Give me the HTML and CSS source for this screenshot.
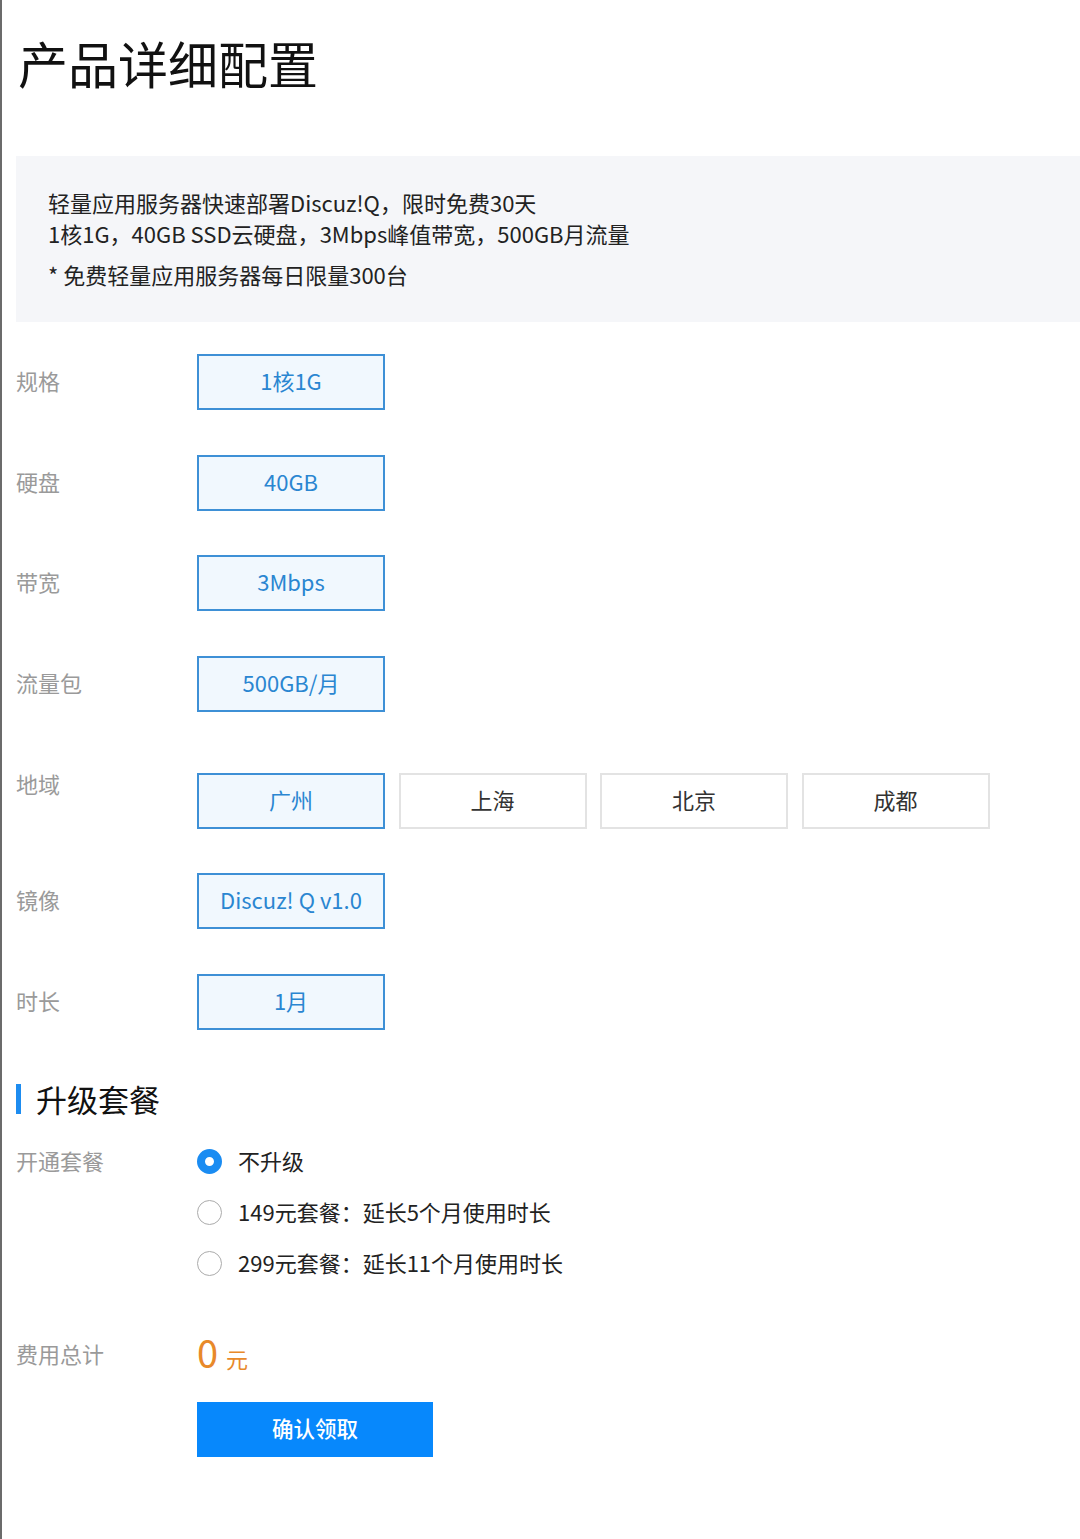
FILE: index.html
```html
<!DOCTYPE html>
<html lang="zh-CN">
<head>
<meta charset="utf-8">
<title>产品详细配置</title>
<link rel="stylesheet" href="styles.css">
</head>
<body>
<div class="page">
  <h1 class="title">产品详细配置</h1>

  <div class="intro">
    <p class="intro-line">轻量应用服务器快速部署Discuz!Q<span class="pn">，</span>限时免费30天</p>
    <p class="intro-line">1核1G<span class="pn">，</span>40GB SSD云硬盘<span class="pn">，</span>3Mbps峰值带宽<span class="pn">，</span>500GB月流量</p>
    <p class="intro-line note">* 免费轻量应用服务器每日限量300台</p>
  </div>

  <div class="row">
    <div class="label">规格</div>
    <div class="opts"><div class="opt active">1核1G</div></div>
  </div>
  <div class="row">
    <div class="label">硬盘</div>
    <div class="opts"><div class="opt active">40GB</div></div>
  </div>
  <div class="row">
    <div class="label">带宽</div>
    <div class="opts"><div class="opt active">3Mbps</div></div>
  </div>
  <div class="row">
    <div class="label">流量包</div>
    <div class="opts"><div class="opt active">500GB/月</div></div>
  </div>
  <div class="row row-top">
    <div class="label">地域</div>
    <div class="opts">
      <div class="opt active">广州</div>
      <div class="opt">上海</div>
      <div class="opt">北京</div>
      <div class="opt">成都</div>
    </div>
  </div>
  <div class="row">
    <div class="label">镜像</div>
    <div class="opts"><div class="opt active">Discuz! Q v1.0</div></div>
  </div>
  <div class="row">
    <div class="label">时长</div>
    <div class="opts"><div class="opt active">1月</div></div>
  </div>

  <h2 class="section">升级套餐</h2>

  <div class="plan-row">
    <div class="label">开通套餐</div>
    <div class="radios">
      <div class="radio-item"><span class="radio checked"></span><span class="radio-text">不升级</span></div>
      <div class="radio-item"><span class="radio"></span><span class="radio-text">149元套餐<span class="pn">：</span>延长5个月使用时长</span></div>
      <div class="radio-item"><span class="radio"></span><span class="radio-text">299元套餐<span class="pn">：</span>延长11个月使用时长</span></div>
    </div>
  </div>

  <div class="fee-row">
    <div class="label">费用总计</div>
    <div class="fee"><span class="fee-num">0</span><span class="fee-unit">元</span></div>
  </div>

  <div class="submit-row">
    <button class="submit">确认领取</button>
  </div>
</div>
</body>
</html>
```

FILE: styles.css
```css
html, body {
  margin: 0;
  padding: 0;
  background: #fff;
}
body {
  font-family: "Noto Sans CJK SC", "Noto Sans", sans-serif;
  color: #333;
}
.page {
  box-sizing: border-box;
  min-height: 1539px;
  border-left: 2px solid #6b6b6b;
  padding-left: 14px;
  padding-top: 37px;
  padding-bottom: 40px;
}
.title {
  margin: 0 0 69px 2px;
  font-size: 50px;
  line-height: 50px;
  font-weight: 400;
  color: #111;
}
.pn {
  font-family: "Noto Sans CJK TC", "Noto Sans CJK SC", sans-serif;
}
.intro {
  background: #f5f6f9;
  padding: 31px 32px 31px;
  height: 166px;
  box-sizing: border-box;
}
.intro-line {
  margin: 0;
  font-size: 22px;
  line-height: 31px;
  color: #222;
}
.intro-line.note {
  margin-top: 10px;
}
.row {
  display: flex;
  align-items: center;
  margin-top: 44.7px;
}
.intro + .row {
  margin-top: 32px;
}
.row-top {
  align-items: flex-start;
  margin-top: 61px;
}
.row-top .label {
  line-height: 24px;
  margin-top: -2px;
}
.row-top + .row {
  margin-top: 44px;
}
.label {
  width: 181px;
  flex: none;
  font-size: 22px;
  line-height: 30px;
  padding-bottom: 4px;
  color: #9a9a9a;
}
.opts {
  display: flex;
  gap: 13.5px;
}
.opt {
  box-sizing: border-box;
  width: 188px;
  height: 56px;
  display: flex;
  align-items: center;
  justify-content: center;
  padding-bottom: 4px;
  border: 2px solid #e3e3e3;
  background: #fff;
  font-size: 22px;
  color: #333;
}
.opt.active {
  border-color: #3e90d6;
  background: #f1f8fe;
  color: #2a86d1;
}
.section {
  margin: 54px 0 0 0;
  border-left: 5px solid #1d8cf0;
  padding-left: 15px;
  font-size: 31px;
  line-height: 30px;
  height: 30px;
  font-weight: 400;
  color: #111;
}
.plan-row {
  display: flex;
  align-items: flex-start;
  margin-top: 33px;
}
.plan-row .label {
  margin-top: -2px;
}
.radios {
  display: flex;
  flex-direction: column;
  gap: 21px;
}
.radio-item {
  display: flex;
  align-items: center;
  gap: 16px;
  height: 30px;
  font-size: 22px;
  color: #222;
}
.radio-text {
  padding-bottom: 4px;
}
.radio {
  box-sizing: border-box;
  width: 25px;
  height: 25px;
  border-radius: 50%;
  border: 1.5px solid #ababab;
  background: #fff;
  flex: none;
}
.radio.checked {
  border: 8px solid #1a8cf2;
  background: #fff;
}
.fee-row {
  display: flex;
  align-items: center;
  margin-top: 58px;
}
.fee {
  display: flex;
  align-items: baseline;
  gap: 8px;
  color: #e8892a;
  height: 30px;
  padding-bottom: 6px;
}
.fee-num {
  font-size: 38px;
  line-height: 30px;
}
.fee-unit {
  font-size: 22px;
  line-height: 30px;
}
.submit-row {
  margin-top: 29.5px;
  padding-left: 181px;
}
.submit {
  width: 236px;
  height: 55px;
  border: 0;
  padding: 0 0 4px;
  background: #0788fc;
  color: #fff;
  font-family: "Noto Sans CJK SC", "Noto Sans", sans-serif;
  font-size: 21.5px;
  font-weight: 500;
  cursor: pointer;
}
```
